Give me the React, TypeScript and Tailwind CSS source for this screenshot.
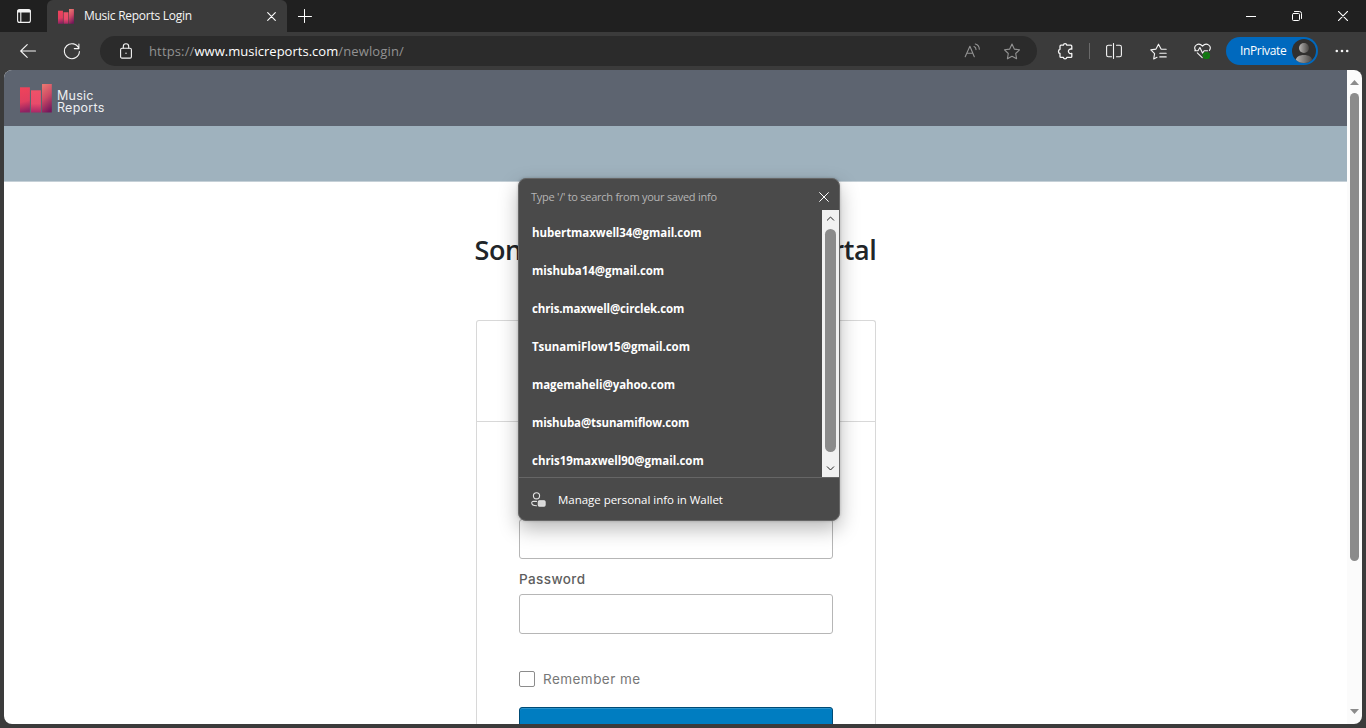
import type { ReactNode } from "react";

const UI = "font-['Open_Sans','Noto_Sans',sans-serif]";

function Icon({ w, h, className = "", children }: { w: number; h: number; className?: string; children: ReactNode }) {
  return (
    <svg
      width={w}
      height={h}
      viewBox={`0 0 ${w} ${h}`}
      fill="none"
      stroke="currentColor"
      strokeWidth="1.1"
      strokeLinecap="round"
      strokeLinejoin="round"
      className={`shrink-0 ${className}`}
    >
      {children}
    </svg>
  );
}

function Bars({ w, h, id }: { w: number; h: number; id: string }) {
  return (
    <svg width={w} height={h} viewBox="0 0 32 29" preserveAspectRatio="none" className="shrink-0">
      <defs>
        <linearGradient id={`${id}a`} x1="0" y1="0" x2="0.1" y2="1">
          <stop offset="0" stopColor="#f0435a" />
          <stop offset="0.6" stopColor="#e03f60" />
          <stop offset="1" stopColor="#8e2262" />
        </linearGradient>
        <linearGradient id={`${id}b`} x1="0" y1="0" x2="0" y2="1">
          <stop offset="0" stopColor="#ef5268" />
          <stop offset="0.6" stopColor="#e94b6b" />
          <stop offset="1" stopColor="#a92767" />
        </linearGradient>
        <linearGradient id={`${id}c`} x1="0.3" y1="0" x2="0.6" y2="1">
          <stop offset="0" stopColor="#e77470" />
          <stop offset="0.45" stopColor="#cf4b65" />
          <stop offset="1" stopColor="#75165b" />
        </linearGradient>
      </defs>
      <rect x="0" y="3.3" width="9.9" height="25.2" fill={`url(#${id}a)`} />
      <rect x="11" y="6.3" width="9.9" height="22.2" fill={`url(#${id}b)`} />
      <rect x="22" y="0" width="9.8" height="28.5" fill={`url(#${id}c)`} />
    </svg>
  );
}

function TitleBar() {
  return (
    <div className="flex h-8 shrink-0 items-stretch bg-[#202020] text-white">
      <div className="flex w-[47px] items-center pl-[17px]">
        <Icon w={14} h={14} className="text-[#f2f2f2]">
          <rect x="0.6" y="0.6" width="12.8" height="12.8" rx="2" />
          <path d="M1 1.4h12v1.6H1z" fill="currentColor" />
          <path d="M3.8 3v10.4" />
        </Icon>
      </div>
      <div className="flex w-[240px] items-center rounded-t-[6px] bg-[#3b3b3b] pl-[11px]">
        <Bars w={16} h={15} id="tab" />
        <span className="ml-[10px] w-[170px] whitespace-nowrap text-[12px] leading-4 tracking-[-0.27px] text-[#f5f5f5]">
          Music Reports Login
        </span>
        <Icon w={9} h={9} className="ml-[13px]">
          <path d="M.7.7l7.6 7.6M8.3.7L.7 8.3" />
        </Icon>
      </div>
      <div className="flex flex-1 items-center pl-[11px]">
        <Icon w={14} h={14} className="-mt-px">
          <path d="M6.5.5v13M0 7.5h13.5" strokeWidth="1" />
        </Icon>
      </div>
      <div className="flex items-center pr-[18px]">
        <Icon w={10} h={10} className="mr-9">
          <path d="M0 5.5h10" strokeWidth="1" />
        </Icon>
        <Icon w={10} h={10} className="mr-9">
          <rect x=".5" y="2.5" width="7" height="7" rx="1" strokeWidth="1" />
          <path d="M2.5.5h5a2 2 0 0 1 2 2v5" strokeWidth="1" />
        </Icon>
        <Icon w={10} h={10}>
          <path d="M.4.4l9.2 9.2M9.6.4L.4 9.6" />
        </Icon>
      </div>
    </div>
  );
}

function Toolbar() {
  return (
    <div className="flex h-[38px] shrink-0 items-center bg-[#3b3b3b] text-[#f5f5f5]">
      <Icon w={17} h={14} className="ml-[20px]">
        <path d="M15.5 7H.7M7.2.7L.7 7l6.5 6.3" />
      </Icon>
      <Icon w={17} h={17} className="ml-[26px]">
        <path d="M15.9 5.5A7.5 7.5 0 1 0 16.4 8.5M15.9 1v4.6h-4.6" />
      </Icon>
      <div className="ml-[20px] flex h-[30px] w-[937px] items-center rounded-full bg-[#2b2b2b] pl-[20px] pr-[16px]">
        <Icon w={12} h={16} className="-mt-px">
          <rect x=".6" y="5.3" width="10.8" height="9.8" rx="1.4" />
          <path d="M3.3 5V3.4a2.7 2.7 0 0 1 5.4 0V5" />
          <circle cx="6" cy="10.2" r=".7" fill="currentColor" stroke="none" />
        </Icon>
        <span className="ml-[17px] whitespace-nowrap text-[13px] leading-5 tracking-[0.14px] text-[#929292]">
          https://<span className="tracking-[0.02px] text-white">www.musicreports.com</span>/newlogin/
        </span>
        <Icon w={16} h={15} className="-mt-[2px] ml-auto text-[#929292]">
          <path d="M1.2 13.8L5.9 3.3l4.4 10.5M2.7 10.2h6" />
          <path d="M10 3.6c1.4.5 2 1.6 2 3M11.3 1c2.5.7 4 2.6 4 5.2" />
        </Icon>
        <Icon w={18} h={17} className="ml-[23px] text-[#929292]">
          <path d="M9 1.1l2.3 5 5.2.7-3.8 3.7.9 5.3L9 13.3l-4.6 2.5.9-5.3L1.5 6.8l5.2-.7z" />
        </Icon>
      </div>
      <Icon w={16} h={17} className="ml-[20px]">
        <path
          strokeWidth="1.3"
          d="M4 2.2h2.4c.2-2 3.1-2 3.4 0h4c.7 0 1 .4 1 1v3c-1.9-.7-3.4.6-3.4 2.1s1.5 2.8 3.4 2.1v3c0 .7-.3 1-1 1H9.8c-.3 2-3.2 2-3.4 0H4c-.7 0-1-.3-1-1v-2.9c-2-.2-2-3.9 0-4.2V3.2c0-.7.3-1 1-1z"
        />
      </Icon>
      <div className="ml-[16px] h-4 w-px bg-[#6a6a6a]" />
      <Icon w={16} h={16} className="ml-[16px]">
        <path d="M5.5 2.2H2.4A1.8 1.8 0 0 0 .6 4v8c0 1 .8 1.8 1.8 1.8h3.1M10.5 2.2h3.1c1 0 1.8.8 1.8 1.8v8c0 1-.8 1.8-1.8 1.8h-3.1M7.5.5v15" />
      </Icon>
      <Icon w={17} h={17} className="ml-[28px]">
        <path d="M16.2 6.3h-5L8.5 1.2 6 6.1l-5.2.8 3.8 3.7-.9 5.3L7 14.2M9.8 10.2h6.4M9.8 13.9h6.4" />
      </Icon>
      <Icon w={18} h={16} className="ml-[27px]">
        <path d="M1.6 7.5C.2 5.3.8 3 2.5 1.9c2-1.2 4.3-.7 6 1.3 1.7-2 4-2.5 6-1.3 1.7 1.1 2.3 3.4.9 5.6M.7 7.7H4l1.9-3.2 2.6 5.6 1.7-2.4h3.3M3.3 9.8l4.9 4.8" />
        <circle cx="12.4" cy="12.6" r="3.7" fill="#107c10" stroke="none" />
        <path d="M11 13.8l2.9-2.4" stroke="#245d24" />
      </Icon>
      <div className="ml-[14px] flex h-7 w-[92px] items-center justify-between rounded-full bg-[#0069be] pl-[14px] pr-[2px]">
        <span className="text-[12px] leading-4 tracking-[-0.36px] text-white">InPrivate</span>
        <svg width="24" height="24" viewBox="0 0 24 24" className="shrink-0">
          <defs>
            <linearGradient id="face" x1="0" x2="1">
              <stop offset="0" stopColor="#b8b6b4" />
              <stop offset="1" stopColor="#484644" />
            </linearGradient>
            <clipPath id="disc">
              <circle cx="12" cy="12" r="12" />
            </clipPath>
          </defs>
          <g clipPath="url(#disc)">
            <rect width="24" height="24" fill="#31302f" />
            <circle cx="12" cy="9" r="5" fill="url(#face)" />
            <path d="M3.5 22c.5-4 3.5-6 8.5-6s8 2 8.5 6v3h-17z" fill="url(#face)" />
          </g>
        </svg>
      </div>
      <svg width="14" height="4" viewBox="0 0 14 4" fill="currentColor" className="ml-[17px] shrink-0">
        <circle cx="1.8" cy="2" r="1.3" />
        <circle cx="7" cy="2" r="1.3" />
        <circle cx="12.2" cy="2" r="1.3" />
      </svg>
    </div>
  );
}

const suggestions = [
  { text: "hubertmaxwell34@gmail.com", fit: "tracking-[-0.05px]" },
  { text: "mishuba14@gmail.com", fit: "tracking-[-0.03px]" },
  { text: "chris.maxwell@circlek.com", fit: "tracking-[-0.14px]" },
  { text: "TsunamiFlow15@gmail.com", fit: "tracking-[-0.04px]" },
  { text: "magemaheli@yahoo.com", fit: "tracking-[-0.07px]" },
  { text: "mishuba@tsunamiflow.com", fit: "tracking-[-0.14px]" },
  { text: "chris19maxwell90@gmail.com", fit: "tracking-[-0.03px]" },
];

function SuggestionPopup() {
  return (
    <div className="absolute left-[518px] top-[178px] flex h-[343px] w-[322px] flex-col overflow-hidden rounded-[8px] border border-[#666] bg-[#4a4a4a] text-white shadow-[0_8px_20px_rgba(0,0,0,0.28),0_0_3px_rgba(0,0,0,0.2)]">
      <div className="flex h-[31px] shrink-0 items-center justify-between pl-3 pr-[10px] pt-[4px]">
        <span className="text-[11px] leading-4 tracking-[-0.26px] text-[#b5b5b5]">Type '/' to search from your saved info</span>
        <Icon w={10} h={10}>
          <path d="M.6.6l8.8 8.8M9.4.6L.6 9.4" strokeWidth="1" />
        </Icon>
      </div>
      <div className="flex h-[267px] shrink-0">
        <ul className="flex-1 pl-[13px] pt-[4px]">
          {suggestions.map((s) => (
            <li key={s.text} className={`flex h-[38px] items-center whitespace-nowrap text-[11.5px] font-bold leading-4 ${s.fit}`}>
              {s.text}
            </li>
          ))}
        </ul>
        <div className="flex w-[17px] flex-col items-center bg-[#f1f1f1] pb-[6px] pt-[6px] text-[#222]">
          <Icon w={9} h={5}>
            <path d="M1.3 4.2L4.5 1l3.2 3.2" strokeWidth="1" />
          </Icon>
          <div className="mt-[8px] h-[223px] w-[11px] rounded-full bg-[#8b8b8b]" />
          <Icon w={9} h={5} className="mt-auto">
            <path d="M1.3.8L4.5 4 7.7.8" strokeWidth="1" />
          </Icon>
        </div>
      </div>
      <div className="flex flex-1 items-center border-t border-[#666] pl-[12px] pt-[2px]">
        <Icon w={16} h={16} className="text-[#e2e2e2]">
          <circle cx="5.5" cy="3.8" r="3.1" />
          <path d="M5.5 9.4H2.2C1.3 9.4.7 10 .7 10.8c0 1.9 1.8 3 4.8 3" />
          <rect x="7.3" y="8.7" width="6.8" height="5.4" rx="1" fill="#d8d8d8" />
        </Icon>
        <span className="ml-[11px] text-[11.5px] leading-4 tracking-[-0.03px]">Manage personal info in Wallet</span>
      </div>
    </div>
  );
}

function Page() {
  return (
    <div className="flex min-w-0 flex-1 flex-col bg-white">
      <header className="flex h-14 shrink-0 items-start bg-[#5d6470] pl-4 pt-[14px]">
        <Bars w={32} h={29} id="logo" />
        <p className="ml-[5px] mt-[6px] font-[Inter,sans-serif] text-[12.5px] leading-[12px] tracking-[0.25px] text-[#eceef0]">
          Music
          <br />
          Reports
        </p>
      </header>
      <div className="h-14 shrink-0 border-b border-[#c5d0d7] bg-[#9fb2be]" />
      <main className="flex min-h-0 flex-1 flex-col items-center">
        <h1 className="mt-[48px] flex h-10 w-[402px] shrink-0 items-center justify-between text-[27px] font-semibold tracking-[-0.4px] text-[#212529]">
          <span>Son</span>
          <span>rtal</span>
        </h1>
        <form className="ml-px mt-[50px] flex w-[400px] flex-1 flex-col rounded-t-[3px] border border-b-0 border-[#d8d8d8] font-[Inter,sans-serif]">
          <div className="h-[101px] shrink-0 border-b border-[#d8d8d8]" />
          <div className="flex flex-1 flex-col px-[42px] pt-[97px]">
            <div className="h-10 w-[314px] shrink-0 rounded-[3px] border border-[#b6b6b6] bg-white" />
            <label className="mt-[12px] h-4 text-[13.5px] font-medium leading-4 tracking-[0.4px] text-[#5e5e5e]">Password</label>
            <div className="mt-[7px] h-10 w-[314px] shrink-0 rounded-[3px] border border-[#b6b6b6] bg-white" />
            <div className="mt-[37px] flex h-4 shrink-0 items-center">
              <div className="h-4 w-4 rounded-[2px] border border-[#8c8c8c]" />
              <span className="ml-2 text-[13.5px] leading-4 tracking-[0.45px] text-[#777]">Remember me</span>
            </div>
            <div className="mt-[20px] h-[40px] w-[314px] shrink-0 rounded-[3px] border border-[#004b75] bg-[#007dc1] shadow-[inset_0_1px_0_#2c93cb]" />
          </div>
        </form>
      </main>
    </div>
  );
}

function PageScrollbar() {
  return (
    <div className="flex w-[15px] shrink-0 flex-col items-center bg-[#fbfbfb] pb-[10px] pt-[10px]">
      <svg width="9" height="5" viewBox="0 0 9 5" fill="#8b8b8b">
        <path d="M0 5L4.5 0 9 5z" />
      </svg>
      <div className="mt-[8px] h-[468px] w-[9px] rounded-full bg-[#8b8b8b]" />
      <svg width="9" height="5" viewBox="0 0 9 5" fill="#8b8b8b" className="mt-auto">
        <path d="M0 0h9L4.5 5z" />
      </svg>
    </div>
  );
}

export default function App() {
  return (
    <div className={`relative flex h-[728px] w-[1366px] flex-col overflow-hidden bg-[#3b3b3b] ${UI}`}>
      <TitleBar />
      <Toolbar />
      <div className="mx-1 mb-1 flex min-h-0 flex-1 overflow-hidden rounded-[8px]">
        <Page />
        <PageScrollbar />
      </div>
      <SuggestionPopup />
    </div>
  );
}
